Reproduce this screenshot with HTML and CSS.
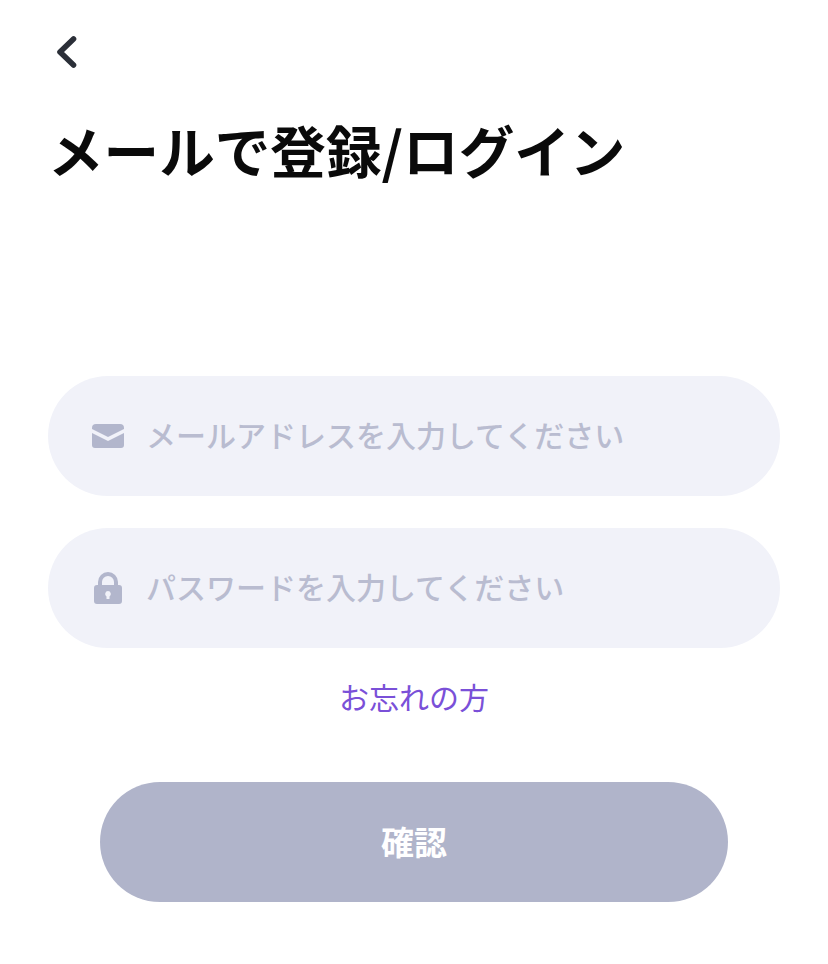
FILE: index.html
```html
<!DOCTYPE html>
<html lang="ja">
<head>
    <meta charset="utf-8">
    <title>メールで登録/ログイン</title>
    <link rel="stylesheet" href="styles.css">
</head>
<body>
    <button class="back_button">
        <svg width="24" height="34" viewBox="0 0 24 34">
            <path d="M19.5 3 L6 16 L19.5 29" fill="none" stroke="#2b2f38" stroke-width="5.6" stroke-linecap="round" stroke-linejoin="round"/>
        </svg>
    </button>

    <h1 class="title">メールで登録/ログイン</h1>

    <div class="form">
        <div class="field">
            <svg class="field_icon" width="32" height="24" viewBox="0 0 32 24">
                <path d="M4 0 H28 Q32 0 32 4 V5 L16 13 L0 5 V4 Q0 0 4 0 Z" fill="#b2b6cc"/>
                <path d="M0 9 L16 17 L32 9 V21 Q32 24 29 24 H3 Q0 24 0 21 Z" fill="#b2b6cc"/>
            </svg>
            <span class="placeholder">メールアドレスを入力してください</span>
        </div>

        <div class="field">
            <svg class="field_icon" width="32" height="32" viewBox="0 0 32 32">
                <path d="M8 14 V10 A8 8 0 0 1 24 10 V14" fill="none" stroke="#b2b6cc" stroke-width="4"/>
                <path fill-rule="evenodd" d="M5 13 H27 Q30 13 30 16 V29 Q30 32 27 32 H5 Q2 32 2 29 V16 Q2 13 5 13 Z M16 19 A3 3 0 0 0 14.5 24.5 V27 H17.5 V24.5 A3 3 0 0 0 16 19 Z" fill="#b2b6cc"/>
            </svg>
            <span class="placeholder">パスワードを入力してください</span>
        </div>

        <a class="forgot">お忘れの方</a>

        <button class="confirm_button">確認</button>
    </div>
</body>
</html>
```

FILE: styles.css
```css
body{
    margin:0;
    background-color:white;
    font-family:"Noto Sans CJK JP","Liberation Sans",sans-serif;
    padding:36px 48px 0 48px;
}

.back_button{
    display:block;
    width:24px;
    height:36px;
    margin-left:6px;
    padding:0;
    border:none;
    background:none;
}

.title{
    margin:39px 0 0 0;
    font-size:55.6px;
    line-height:76px;
    font-weight:700;
    color:#0a0a0a;
    white-space:nowrap;
}

.form{
    display:flex;
    flex-direction:column;
    margin-top:189px;
}

.field{
    display:flex;
    align-items:center;
    height:120px;
    margin-bottom:32px;
    padding-left:44px;
    border-radius:60px;
    background-color:#f1f2f9;
}

.field_icon{
    flex-shrink:0;
}

.placeholder{
    margin-left:22px;
    padding-bottom:4px;
    font-size:30px;
    font-weight:500;
    color:#b9bcd0;
    white-space:nowrap;
}

.forgot{
    align-self:center;
    margin-top:-6px;
    font-size:30px;
    line-height:44px;
    color:#7a50d8;
}

.confirm_button{
    align-self:center;
    width:628px;
    height:120px;
    margin-top:64px;
    padding-bottom:4px;
    border:none;
    border-radius:60px;
    background-color:#b0b4ca;
    color:white;
    font-family:inherit;
    font-size:33px;
    font-weight:700;
}
```
